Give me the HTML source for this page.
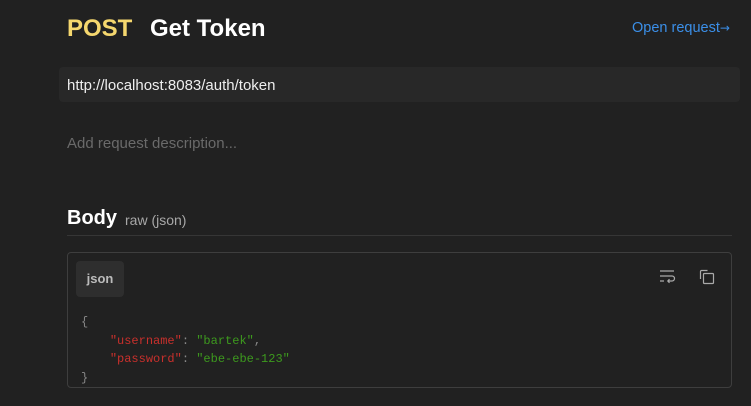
<!DOCTYPE html>
<html><head><meta charset="utf-8"><style>
*{margin:0;padding:0;box-sizing:border-box}
body{width:751px;height:406px;background:#212121;font-family:"Liberation Sans",sans-serif;position:relative;overflow:hidden}
.a{position:absolute;white-space:nowrap}
</style></head><body>
<div class="a" style="left:67px;top:15px;font-size:24px;font-weight:bold;color:#f5d76e">POST</div>
<div class="a" style="left:150px;top:15px;font-size:24px;font-weight:bold;color:#fff">Get Token</div>
<div class="a" style="left:632px;top:20px;font-size:14.5px;color:#3b8fe8">Open request<span style="font-family:'DejaVu Sans';font-size:12px">→</span></div>
<div class="a" style="left:59px;top:67px;width:681px;height:35px;background:#282828;border-radius:4px"></div>
<div class="a" style="left:67px;top:77px;font-size:15px;color:#eee">http://localhost:8083/auth/token</div>
<div class="a" style="left:67px;top:135px;font-size:15px;color:#6a6a6a">Add request description...</div>
<div class="a" style="left:67px;top:207px;font-size:20px;font-weight:bold;color:#fff">Body</div>
<div class="a" style="left:125px;top:212px;font-size:14px;color:#a8a8a8">raw (json)</div>
<div class="a" style="left:67px;top:235px;width:665px;height:1px;background:#363636"></div>
<div class="a" style="left:67px;top:252px;width:665px;height:136px;border:1px solid #3e3e3e;border-radius:4px"></div>
<div class="a" style="left:76px;top:261px;width:48px;height:36px;background:#2e2e2e;border-radius:4px;color:#bbb;font-size:13px;font-weight:bold;text-align:center;line-height:36px">json</div>
<svg class="a" style="left:658px;top:268px" width="18" height="16" viewBox="0 0 18 16" fill="none" stroke="#aaa" stroke-width="1.2"><path d="M2 3h14M2 8h12a2.5 2.5 0 0 1 0 5H10M11.5 11.2 9.8 13l1.7 1.8M2 13h4"/></svg>
<svg class="a" style="left:699px;top:269px" width="16" height="16" viewBox="0 0 16 16" fill="none" stroke="#aaa" stroke-width="1.2"><rect x="4.5" y="4.5" width="10" height="10" rx="1"/><path d="M1.5 10V2.5a1 1 0 0 1 1-1h6"/></svg>
<pre class="a" style="white-space:pre;left:81px;top:313px;font-family:'Liberation Mono',monospace;font-size:12px;line-height:18.5px;color:#888">{
    <span style="color:#c9302c">"username"</span>: <span style="color:#3d9a1e">"bartek"</span>,
    <span style="color:#c9302c">"password"</span>: <span style="color:#3d9a1e">"ebe-ebe-123"</span>
}</pre>
</body></html>
